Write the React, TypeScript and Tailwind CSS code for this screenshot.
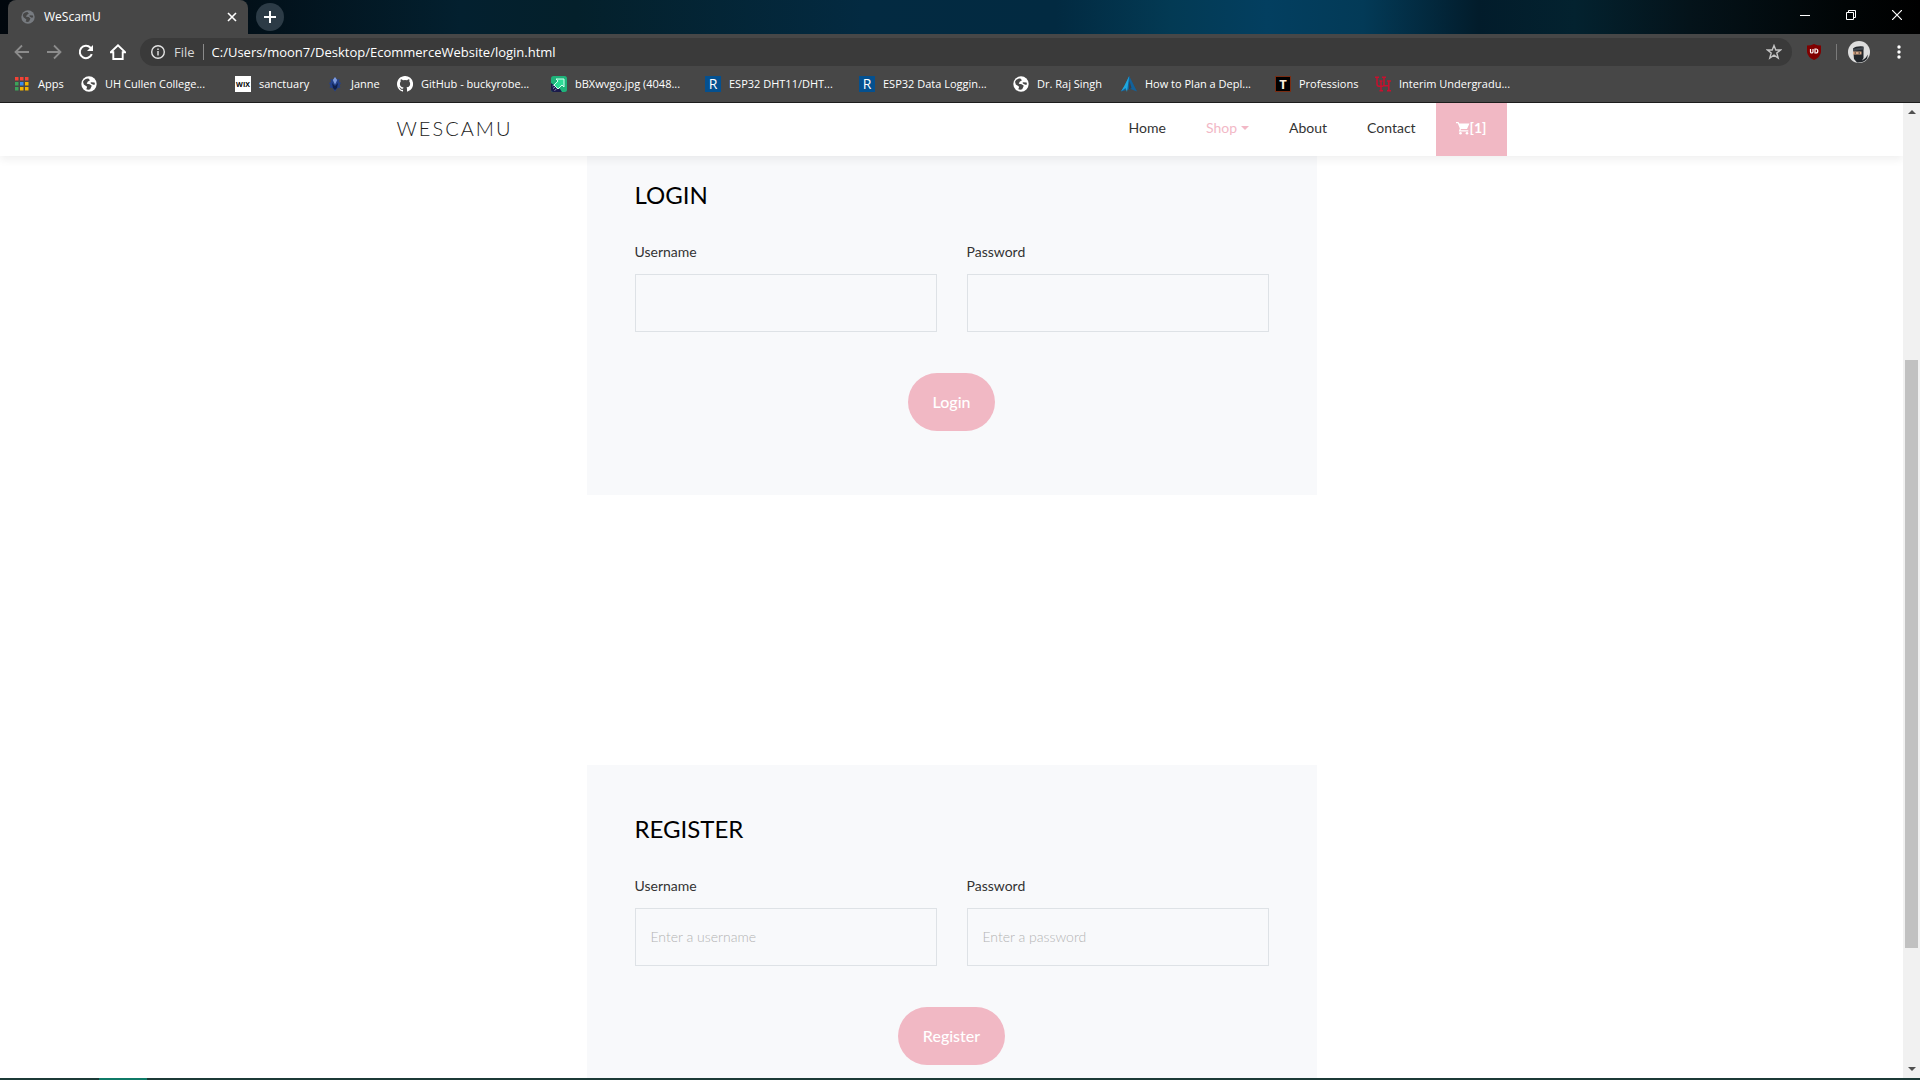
import { ReactNode } from "react";

const Globe = ({ className }: { className?: string }) => (
  <svg viewBox="0 0 24 24" className={className} aria-hidden="true">
    <circle cx="12" cy="12" r="11.5" fill="currentColor" />
    <path d="M3 8.5C5 5 8 3.400 11 3.600L13.500 6.200 10 8.600 8.600 11.500 13 12.200 16.200 14.600 13.800 19.800C12 20.800 9.500 20.600 8 19.800L9.200 16.200 4.200 12.600ZM14.500 9.200 20.400 9.600 21 12.600 18.400 13.200 14.800 11.200Z" fill="#474747" />
  </svg>
);

const Apps = () => {
  const colors = ["#f44336", "#f44336", "#f44336", "#3da35a", "#3b8beb", "#f4b400", "#3da35a", "#f4b400", "#f4b400"];
  return (
    <svg viewBox="0 0 16 16" className="size-4" aria-hidden="true">
      {colors.map((c, i) => (
        <rect key={i} x={1 + (i % 3) * 5} y={1 + Math.floor(i / 3) * 5} width="3.500" height="3.500" fill={c} />
      ))}
    </svg>
  );
};

const Github = () => (
  <svg viewBox="0 0 16 16" className="size-4 fill-white" aria-hidden="true">
    <path d="M8 0C3.580 0 0 3.580 0 8c0 3.540 2.290 6.530 5.470 7.590.4.070.55-.17.55-.38v-1.340c-2.230.48-2.700-1.070-2.700-1.070-.36-.92-.89-1.170-.89-1.170-.73-.5.060-.49.060-.49.8.060 1.230.83 1.230.83.72 1.220 1.870.87 2.330.66.070-.52.28-.87.51-1.070-1.780-.2-3.640-.89-3.640-3.950 0-.87.31-1.590.82-2.150-.08-.2-.36-1.020.080-2.120 0 0 .67-.21 2.200.82a7.600 7.600 0 0 1 4 0c1.530-1.040 2.200-.82 2.200-.82.44 1.100.16 1.920.080 2.120.51.56.82 1.270.82 2.150 0 3.070-1.870 3.750-3.650 3.950.29.25.54.73.54 1.480v2.190c0 .21.150.46.55.38A8 8 0 0 0 8 0Z" />
  </svg>
);

const Janne = () => (
  <svg viewBox="0 0 16 16" className="size-4" aria-hidden="true">
    <path d="M8 1l2 2.500 2.500-.5-.5 3 2 1-1.500 2.500 1 2-3 .5L8 15.500 5.500 12l-3-.5 1-2L2 7l2-1-.5-3 2.500.5Z" fill="#23408a" />
    <path d="M8 1l2.200 3L8 8.500 5.800 4Z" fill="#7f9cdc" />
    <path d="M5 7l3 3 3-3-1 5-2 2-2-2Z" fill="#10204a" />
  </svg>
);

const ImageFile = () => (
  <svg viewBox="0 0 16 16" className="size-4" aria-hidden="true">
    <rect width="16" height="16" rx="2.500" fill="#1fb37a" />
    <path d="M0 7 L4 10 9 13 11 16H2.500Q0 16 0 13.500Z" fill="#1b1a4b" />
    <path d="M5 3H13V11L11 9 7 13 3 9 7 5Z" fill="#2ddc96" stroke="#d6fff0" strokeWidth="1" />
    <path d="M2 12.500 4 11M3.500 14.500 5.500 13M1.500 10 3 9" stroke="#b8b8e0" strokeWidth=".8" />
  </svg>
);

const Peak = () => (
  <svg viewBox="0 0 16 16" className="size-4" aria-hidden="true">
    <path d="M8.200 0L16 15.500 9.500 13 0 15.500 3.500 10Z" fill="#12619b" />
    <path d="M8.200 0L6 16 4.500 12 0 15.500 3.500 9.500Z" fill="#1ea7dd" />
    <path d="M8.500 5L10.500 12 8 13.500Z" fill="#3b3f44" />
  </svg>
);

const Interlock = () => (
  <svg viewBox="0 0 16 16" className="size-4" fill="none" stroke="#c8102e" strokeWidth="1.500" aria-hidden="true">
    <path d="M0 1.200H4M2 1.200V8Q2 10.200 4 10.200H7.500Q9 10.200 9 8.500V1.200M7 1.200H11M6 5V14.500M4.500 14.800H8M4.500 5H7.500M13.800 5V14.500M12 5H16M12 14.800H16M9 9.800H13.800" />
  </svg>
);

const Tile = ({ className, children }: { className: string; children: ReactNode }) => (
  <span className={`flex size-4 items-center justify-center leading-none ${className}`}>{children}</span>
);
const RTile = () => <Tile className="bg-[#04508f] text-[14px] text-white">R</Tile>;

const bookmarks: { label: string; width: string; icon: ReactNode }[] = [
  { label: "Apps", width: "w-[67px]", icon: <Apps /> },
  { label: "UH Cullen College...", width: "w-[154px]", icon: <Globe className="size-4 text-white" /> },
  { label: "sanctuary", width: "w-[92px]", icon: <Tile className="bg-white text-[7px] font-bold text-black">WIX</Tile> },
  { label: "Janne", width: "w-[70px]", icon: <Janne /> },
  { label: "GitHub - buckyrobe...", width: "w-[154px]", icon: <Github /> },
  { label: "bBXwvgo.jpg (4048...", width: "w-[154px]", icon: <ImageFile /> },
  { label: "ESP32 DHT11/DHT...", width: "w-[154px]", icon: <RTile /> },
  { label: "ESP32 Data Loggin...", width: "w-[154px]", icon: <RTile /> },
  { label: "Dr. Raj Singh", width: "w-[108px]", icon: <Globe className="size-4 text-white" /> },
  { label: "How to Plan a Depl...", width: "w-[154px]", icon: <Peak /> },
  { label: "Professions", width: "w-[100px]", icon: <Tile className="border border-[#7a2c12] bg-black text-[13px] font-bold text-[#fbeedd]">T</Tile> },
  { label: "Interim Undergradu...", width: "w-[154px]", icon: <Interlock /> },
];

function TitleBar() {
  return (
    <div className="flex h-[34px] items-stretch bg-[linear-gradient(90deg,#01070d_0%,#021019_13%,#03202f_24%,#04202b_30%,#032a41_45%,#022a41_55%,#033a54_61%,#033f60_66%,#033a57_71%,#021c2b_77%,#03222f_82%,#04131a_88%,#010506_96%,#000_100%)] pl-2">
      <div className="flex w-60 items-center rounded-t-lg bg-[#474747] pr-[9px] pl-[13px]">
        <Globe className="size-3.5 text-[#777b80]" />
        <span className="ml-[9px] flex-1 text-[12px] text-white">WeScamU</span>
        <button aria-label="Close tab" className="p-0.5 text-white">
          <svg viewBox="0 0 10 10" className="size-2.5" stroke="currentColor" strokeWidth="1.600"><path d="M1 1 9 9M9 1 1 9" /></svg>
        </button>
      </div>
      <button aria-label="New tab" className="ml-2 flex size-7 items-center justify-center self-center rounded-full bg-[#2c3b46] text-white">
        <svg viewBox="0 0 12 12" className="size-3" stroke="currentColor" strokeWidth="2"><path d="M6 0V12M0 6H12" /></svg>
      </button>
      <div className="ml-auto flex h-[29px] text-white">
        <button aria-label="Minimize" className="flex w-[46px] items-center justify-center">
          <svg viewBox="0 0 10 10" className="size-2.5" stroke="currentColor"><path d="M0 5.500H10" /></svg>
        </button>
        <button aria-label="Restore" className="flex w-[46px] items-center justify-center">
          <svg viewBox="0 0 10 10" className="size-2.5" fill="none" stroke="currentColor"><path d="M.5 2.500H7.500V9.500H.5ZM2.500 2.500V.5H9.500V7.500H7.500" /></svg>
        </button>
        <button aria-label="Close" className="flex w-[46px] items-center justify-center">
          <svg viewBox="0 0 10 10" className="size-2.5" stroke="currentColor" strokeWidth="1.200"><path d="M0 0 10 10M10 0 0 10" /></svg>
        </button>
      </div>
    </div>
  );
}

function Toolbar() {
  return (
    <div className="flex h-9 items-center pr-[13px] pl-3.5">
      <div className="flex gap-4">
        <button aria-label="Back" className="text-[#8c8c8c]">
          <svg viewBox="0 0 16 16" className="size-4" fill="none" stroke="currentColor" strokeWidth="1.800"><path d="M15 8H2M8 1.500 1.500 8 8 14.500" /></svg>
        </button>
        <button aria-label="Forward" className="text-[#8c8c8c]">
          <svg viewBox="0 0 16 16" className="size-4" fill="none" stroke="currentColor" strokeWidth="1.800"><path d="M1 8H14M8 1.500 14.500 8 8 14.500" /></svg>
        </button>
        <button aria-label="Reload" className="text-white">
          <svg viewBox="0 0 16 16" className="size-4" fill="none" stroke="currentColor" strokeWidth="2"><path d="M13.800 10.200A6.200 6.200 0 1 1 12.500 3.700L14 5.200" /><path d="M15 1V7H9Z" fill="currentColor" stroke="none" /></svg>
        </button>
        <button aria-label="Home" className="text-white">
          <svg viewBox="0 0 16 16" className="size-4" fill="none" stroke="currentColor" strokeWidth="1.900"><path d="M.7 8.300 8 1.300 15.300 8.300H12.700V15H3.300V8.300Z" /></svg>
        </button>
      </div>
      <div className="ml-3.5 flex h-7 flex-1 items-center rounded-full bg-[#3a3a3a] pr-2.5 pl-[11px] text-[13px]">
        <svg viewBox="0 0 14 14" className="size-3.5" fill="none" stroke="#e4e4e4" strokeWidth="1.400" aria-hidden="true"><circle cx="7" cy="7" r="6.300" /><path d="M7 6V10.500M7 3.500V5" /></svg>
        <span className="ml-[9px] pt-px text-[#d8d8d8]">File</span>
        <span className="mx-2 h-4 w-px bg-[#8a8a8a]" />
        <input aria-label="Address" readOnly defaultValue="C:/Users/moon7/Desktop/EcommerceWebsite/login.html" className="min-w-0 flex-1 bg-transparent pt-px text-white outline-none" />
        <button aria-label="Bookmark this page" className="text-[#c4c4c4]">
          <svg viewBox="0 0 16 16" className="size-4" fill="none" stroke="currentColor" strokeWidth="1.400"><path d="M8 1.500 9.800 6H14.500L10.800 9 12.200 14 8 11.200 3.800 14 5.200 9 1.500 6H6.200Z" /></svg>
        </button>
      </div>
      <button aria-label="uBlock" className="ml-3.5">
        <svg viewBox="0 0 16 16" className="size-4" aria-hidden="true"><path d="M8 0Q11 1.500 15 1.500V8Q14.500 13 8 16 1.500 13 1 8V1.500Q5 1.500 8 0Z" fill="#800000" /><path d="M4.500 5V8Q4.500 9 5.700 9T7 8V5M9 5H10Q11.800 5 11.800 7T10 9H9Z" fill="none" stroke="#fff" strokeWidth="1.200" /></svg>
      </button>
      <span className="ml-3.5 h-4 w-px bg-[#7a7a7a]" />
      <button aria-label="Profile" className="ml-[11px]">
        <svg viewBox="0 0 22 22" className="size-[22px]" aria-hidden="true">
          <circle cx="11" cy="11" r="11" fill="#dedede" />
          <path d="M5 7.500Q8 4.800 15.500 5.500V17L14 19.500 17.500 17 20 13.500 19 18Q15 22 9 21.500L6 18Z" fill="#22262b" />
          <path d="M5 8 15.500 6V8.500L5 10Z" fill="#454b52" />
          <rect x="5" y="10.500" width="8.500" height="3" fill="#d8a888" />
          <path d="M6.500 12H8M10.500 12H12" stroke="#222" />
        </svg>
      </button>
      <button aria-label="Menu" className="ml-[21px]">
        <svg viewBox="0 0 16 16" className="size-4 fill-white"><circle cx="8" cy="3" r="1.700" /><circle cx="8" cy="8" r="1.700" /><circle cx="8" cy="13" r="1.700" /></svg>
      </button>
    </div>
  );
}

function BookmarkBar() {
  return (
    <nav aria-label="Bookmarks" className="flex h-[33px] items-center border-b border-[#1c1c1c] pb-1 pl-3.5 text-[11px]">
      {bookmarks.map((b) => (
        <a key={b.label} href="#" className={`flex shrink-0 items-center gap-2 whitespace-nowrap text-white ${b.width}`}>
          <span className="shrink-0">{b.icon}</span>
          {b.label}
        </a>
      ))}
    </nav>
  );
}

function SiteNav() {
  return (
    <header className="relative z-10 bg-white shadow-[0_4px_8px_rgba(0,0,0,0.06)]">
      <div className="mx-auto flex max-w-[1110px] items-stretch justify-between">
        <a href="#" className="text-[20px] leading-[51px] font-light tracking-[2px] text-[#222] uppercase">WeScamU</a>
        <nav aria-label="Site" className="flex text-[14px] leading-[49px] text-[#333]">
          <a href="#" className="px-5 pb-1">Home</a>
          <a href="#" className="flex items-center px-5 pb-1 text-[#f2b8c6]">
            Shop
            <span className="ml-1 border-x-4 border-t-4 border-x-transparent border-t-[#f2b8c6]" />
          </a>
          <a href="#" className="px-5 pb-1">About</a>
          <a href="#" className="px-5 pb-1">Contact</a>
          <a href="#" className="flex items-center bg-[#f1b8c4] px-5 pb-1 font-bold text-white">
            <svg viewBox="0 0 14 14" className="size-3.5 fill-white" aria-hidden="true"><path d="M0 1H2.500L3.200 2.500H13.500L11 8H5L4.500 9.300H12.300V10.500H2.800L3.800 7.500 1.800 2.200H0Z" /><circle cx="4.500" cy="12.200" r="1.300" /><circle cx="11" cy="12.200" r="1.300" /></svg>
            [1]
          </a>
        </nav>
      </div>
    </header>
  );
}

function Field({ id, label, type, placeholder }: { id: string; label: string; type: string; placeholder?: string }) {
  return (
    <div className="flex flex-1 flex-col gap-2.5">
      <label htmlFor={id} className="text-[14px] leading-6 text-[#333]">{label}</label>
      <input id={id} type={type} placeholder={placeholder} className="h-[58px] w-full border border-[#dee2e6] bg-transparent px-[15px] pb-0.5 text-[14px] font-light outline-none placeholder:text-[#b3b3b3]" />
    </div>
  );
}

function AuthForm({ title, action, prefix, className, hints }: { title: string; action: string; prefix: string; className: string; hints?: [string, string] }) {
  return (
    <form onSubmit={(e) => e.preventDefault()} className={`mx-auto w-full max-w-[730px] bg-[#f8f9fb] px-12 pb-16 ${className}`}>
      <h2 className="text-[24px] leading-8 text-black uppercase">{title}</h2>
      <div className="mt-[29px] flex gap-[30px]">
        <Field id={`${prefix}-username`} label="Username" type="text" placeholder={hints?.[0]} />
        <Field id={`${prefix}-password`} label="Password" type="password" placeholder={hints?.[1]} />
      </div>
      <div className="mt-[41px] flex justify-center">
        <button type="submit" className="h-[58px] rounded-[30px] bg-[#f1b8c4] px-[25px] text-[16px] font-medium text-white">{action}</button>
      </div>
    </form>
  );
}

function Scrollbar() {
  return (
    <div className="flex w-[17px] shrink-0 flex-col items-center bg-[#f1f1f1] py-[7px]">
      <span className="border-x-4 border-b-4 border-x-transparent border-b-[#505050]" />
      <div className="flex w-full flex-1 flex-col items-center">
        <div className="flex-[246]" />
        <div className="w-[13px] flex-[588] bg-[#c1c1c1]" />
        <div className="flex-[119]" />
      </div>
      <span className="border-x-4 border-t-4 border-x-transparent border-t-[#505050]" />
    </div>
  );
}

export default function App() {
  return (
    <div className="flex h-screen flex-col overflow-hidden bg-white">
      <div className="shrink-0 bg-[#474747] font-['Open_Sans',sans-serif]">
        <TitleBar />
        <Toolbar />
        <BookmarkBar />
      </div>
      <div className="flex min-h-0 flex-1 font-[Lato,sans-serif]">
        <div className="min-w-0 flex-1 overflow-hidden">
          <SiteNav />
          <main>
            <AuthForm title="Login" action="Login" prefix="login" className="pt-[23px]" />
            <AuthForm title="Register" action="Register" prefix="register" className="mt-[270px] pt-12" hints={["Enter a username", "Enter a password"]} />
          </main>
        </div>
        <Scrollbar />
      </div>
      <div className="h-0.5 shrink-0 bg-[#1c3a37] pl-[99px]">
        <div className="h-full w-12 bg-[#0f7a67]" />
      </div>
    </div>
  );
}
